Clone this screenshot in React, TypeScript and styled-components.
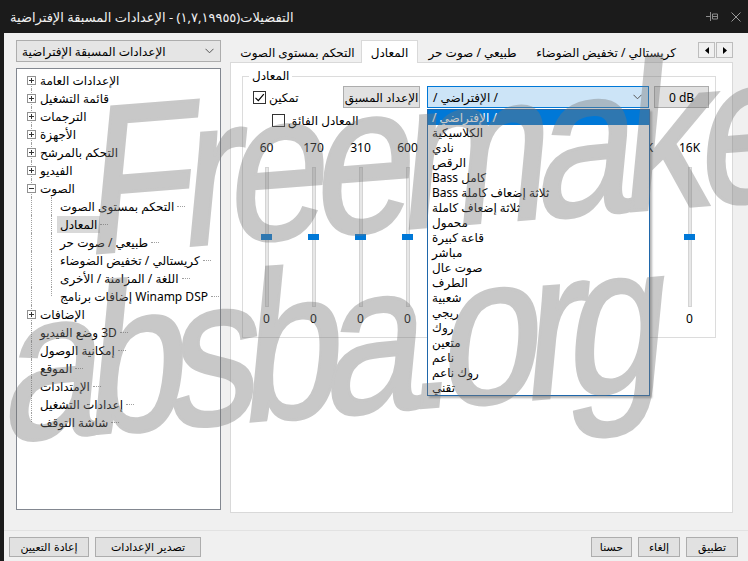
import React from 'react';
import styled, { createGlobalStyle } from 'styled-components';

const GlobalStyle = createGlobalStyle`
  * { box-sizing: border-box; }
  html, body { margin: 0; padding: 0; background: #1b1b1b; }
  body {
    font-family: "Noto Sans", "DejaVu Sans", sans-serif;
    font-size: 12px;
    color: #000;
  }
`;

const Window = styled.div`
  position: relative;
  width: 748px;
  height: 561px;
  background: #1b1b1b;
  display: flex;
  flex-direction: column;
  overflow: hidden;
`;

const TitleBar = styled.div`
  height: 33px;
  flex: none;
  display: flex;
  align-items: center;
  justify-content: space-between;
  padding: 0 7px 0 10px;
  color: #f0f0f0;
`;

const Title = styled.span`
  font-size: 13px;
  direction: rtl;
  white-space: nowrap;
`;

const TitleIcons = styled.div`
  display: flex;
  align-items: center;
  gap: 13px;
`;

const Body = styled.div`
  flex: 1;
  margin-left: 4px;
  background: #f0f0f0;
  display: flex;
  flex-direction: column;
`;

const Main = styled.div`
  display: flex;
  gap: 9px;
  padding: 7px 15px 0 12px;
`;

const Sidebar = styled.div`
  width: 205px;
  flex: none;
  display: flex;
  flex-direction: column;
  gap: 6px;
`;

const Combo = styled.div<{ $focused?: boolean; $width: number }>`
  position: relative;
  width: ${p => p.$width}px;
  height: 22px;
  flex: none;
  display: flex;
  align-items: center;
  justify-content: space-between;
  padding: 0 6px 0 5px;
  background: ${p => (p.$focused ? '#cce4f7' : '#e5e5e5')};
  border: 1px solid ${p => (p.$focused ? '#0078d7' : '#adadad')};
`;

const ComboText = styled.span`
  direction: rtl;
  white-space: nowrap;
`;

const Tree = styled.div`
  height: 442px;
  background: #fff;
  border: 1px solid #828790;
  padding: 2px 0 0 6px;
  display: flex;
  flex-direction: column;
`;

const TreeRow = styled.div`
  height: 18px;
  display: flex;
  align-items: center;
`;

const Guide = styled.span<{ $w: number; $at: number; $line: 'full' | 'top' | 'bottom' }>`
  position: relative;
  flex: none;
  width: ${p => p.$w}px;
  height: 100%;
  display: flex;
  align-items: center;

  &::before {
    content: '';
    position: absolute;
    left: ${p => p.$at}px;
    top: ${p => (p.$line === 'bottom' ? '9px' : '0')};
    bottom: ${p => (p.$line === 'top' ? '9px' : '0')};
    border-left: 1px dotted #a0a0a0;
  }
`;

const Expander = styled.svg`
  position: relative;
  z-index: 1;
  margin-left: 4px;
`;

const TreeLabel = styled.span<{ $selected?: boolean; $ltr?: boolean }>`
  padding: 1px 3px;
  line-height: 15px;
  white-space: nowrap;
  direction: ${p => (p.$ltr ? 'ltr' : 'rtl')};
  background: ${p => (p.$selected ? '#d9d9d9' : 'transparent')};
`;

const Trail = styled.span`
  width: 8px;
  height: 1px;
  border-top: 1px dotted #a0a0a0;
`;

const TabArea = styled.div`
  flex: 1;
  min-width: 0;
  display: flex;
  flex-direction: column;
`;

const TabStrip = styled.div`
  height: 22px;
  display: flex;
  align-items: flex-end;
  padding-left: 4px;
`;

const Tab = styled.div<{ $active?: boolean; $width: number }>`
  position: relative;
  z-index: 1;
  flex: none;
  width: ${p => p.$width}px;
  height: ${p => (p.$active ? 23 : 20)}px;
  margin-bottom: ${p => (p.$active ? -1 : 0)}px;
  display: flex;
  align-items: center;
  justify-content: center;
  direction: rtl;
  white-space: nowrap;
  background: ${p => (p.$active ? '#fff' : 'transparent')};
  border: 1px solid ${p => (p.$active ? '#d9d9d9' : 'transparent')};
  border-bottom: none;
`;

const ScrollArrows = styled.div`
  margin-left: auto;
  align-self: flex-start;
  margin-top: 2px;
  display: flex;
  gap: 1px;
`;

const ArrowButton = styled.div`
  width: 17px;
  height: 16px;
  display: flex;
  align-items: center;
  justify-content: center;
  background: #f0f0f0;
  border: 1px solid #bdbdbd;
`;

const Panel = styled.div`
  height: 451px;
  background: #fff;
  border: 1px solid #d9d9d9;
  padding: 6px 16px 0 11px;
`;

const GroupBox = styled.fieldset`
  margin: 0;
  padding: 0;
  height: 269px;
  border: 1px solid #dcdcdc;
  min-width: 0;
`;

const Legend = styled.legend`
  margin-left: 6px;
  padding: 0 3px;
  line-height: 14px;
  direction: rtl;
`;

const Row = styled.div<{ $indent: number; $top: number }>`
  display: flex;
  align-items: center;
  padding-left: ${p => p.$indent}px;
  margin-top: ${p => p.$top}px;
`;

const CheckItem = styled.label<{ $width?: number }>`
  display: flex;
  align-items: center;
  gap: 3px;
  height: 14px;
  width: ${p => (p.$width ? `${p.$width}px` : 'auto')};
  flex: none;
`;

const Box = styled.span`
  width: 13px;
  height: 13px;
  flex: none;
  border: 1px solid #333;
  background: #fff;
  display: flex;
  align-items: center;
  justify-content: center;
`;

const CheckText = styled.span`
  direction: rtl;
  white-space: nowrap;
`;

const Button = styled.div<{ $width: number; $gap?: number; $ltr?: boolean }>`
  width: ${p => p.$width}px;
  margin-left: ${p => p.$gap ?? 0}px;
  height: 22px;
  flex: none;
  display: flex;
  align-items: center;
  justify-content: center;
  background: #e1e1e1;
  border: 1px solid #adadad;
  direction: ${p => (p.$ltr ? 'ltr' : 'rtl')};
  white-space: nowrap;
`;

const ComboWrap = styled.div`
  position: relative;
  margin-left: 7px;
`;

const DropList = styled.div`
  position: absolute;
  z-index: 5;
  top: 23px;
  left: 0;
  width: 223px;
  background: #fff;
  border: 1px solid #1f67ab;
  box-shadow: 2px 2px 2px rgba(0, 0, 0, 0.3);
`;

const DropItem = styled.div<{ $active?: boolean }>`
  height: 15px;
  line-height: 15px;
  padding: 0 4px;
  direction: rtl;
  text-align: left;
  white-space: nowrap;
  background: ${p => (p.$active ? '#0078d7' : 'transparent')};
  color: ${p => (p.$active ? '#fff' : '#000')};
`;

const Bands = styled.div`
  display: flex;
  margin-top: 14px;
`;

const Band = styled.div`
  width: 47px;
  display: flex;
  flex-direction: column;
  align-items: center;
`;

const BandLabel = styled.span<{ $top?: number }>`
  height: 14px;
  line-height: 14px;
  margin-top: ${p => p.$top ?? 0}px;
`;

const Track = styled.div`
  margin-top: 12px;
  width: 4px;
  height: 140px;
  background: #e7e7e7;
  border: 1px solid #d4d4d4;
  display: flex;
  align-items: center;
  justify-content: center;
`;

const Thumb = styled.div`
  flex: none;
  width: 11px;
  height: 6px;
  background: #0078d7;
`;

const Separator = styled.div`
  margin-top: 17px;
  height: 1px;
  background: #e2e2e2;
`;

const Footer = styled.div`
  display: flex;
  justify-content: space-between;
  padding: 6px 10px 0 5px;
`;

const ButtonGroup = styled.div`
  display: flex;
  gap: 6px;
`;

const FooterButton = styled(Button)`
  height: 20px;
  font-family: "DejaVu Sans", sans-serif;
  font-size: 11px;
`;

const Watermark = styled.div`
  position: absolute;
  inset: 0;
  z-index: 10;
  pointer-events: none;
  overflow: hidden;
  opacity: 0.4;
`;

const WatermarkLine = styled.div<{ $x: number; $y: number; $spacing: number }>`
  position: absolute;
  left: ${p => p.$x}px;
  top: ${p => p.$y}px;
  font-family: "Liberation Sans", Arial, sans-serif;
  font-size: 210px;
  line-height: 1;
  letter-spacing: ${p => p.$spacing}px;
  white-space: nowrap;
  color: #777;
  -webkit-text-stroke: 3px #777;
  transform-origin: 0 0;
  transform: rotate(-4.5deg) skewX(-10deg) scaleX(0.85);
`;

const Chevron = () => (
  <svg width="9" height="6" viewBox="0 0 9 6">
    <path d="M0.5 0.8 L4.5 4.8 L8.5 0.8" fill="none" stroke="#555" strokeWidth="1" />
  </svg>
);

type Node = { label: string; level: 0 | 1; exp?: '+' | '-'; selected?: boolean; ltr?: boolean };

const tree: Node[] = [
  { label: 'الإعدادات العامة', level: 0, exp: '+' },
  { label: 'قائمة التشغيل', level: 0, exp: '+' },
  { label: 'الترجمات', level: 0, exp: '+' },
  { label: 'الأجهزة', level: 0, exp: '+' },
  { label: 'التحكم بالمرشح', level: 0, exp: '+' },
  { label: 'الفيديو', level: 0, exp: '+' },
  { label: 'الصوت', level: 0, exp: '-' },
  { label: 'التحكم بمستوى الصوت', level: 1 },
  { label: 'المعادل', level: 1, selected: true },
  { label: 'طبيعي / صوت حر', level: 1 },
  { label: 'كريستالي / تخفيض الضوضاء', level: 1 },
  { label: 'اللغة / المزامنة / الأخرى', level: 1 },
  { label: 'إضافات برنامج Winamp DSP', level: 1, ltr: true },
  { label: 'الإضافات', level: 0, exp: '+' },
  { label: 'وضع الفيديو \u200E3D', level: 0, ltr: true },
  { label: 'إمكانية الوصول', level: 0 },
  { label: 'الموقع', level: 0 },
  { label: 'الإمتدادات', level: 0 },
  { label: 'إعدادات التشغيل', level: 0 },
  { label: 'شاشة التوقف', level: 0 },
];

const presets = [
  '/ الإفتراضي /',
  'الكلاسيكية',
  'نادي',
  'الرقص',
  'كامل Bass',
  'ثلاثة إضعاف كاملة Bass',
  'ثلاثة إضعاف كاملة',
  'محمول',
  'قاعة كبيرة',
  'مباشر',
  'صوت عال',
  'الطرف',
  'شعبية',
  'ريجي',
  'روك',
  'متعين',
  'ناعم',
  'روك ناعم',
  'تقني',
];

const bands = ['60', '170', '310', '600', '1K', '3K', '6K', '12K', '14K', '16K'];

const ExpanderBox = ({ sign }: { sign: '+' | '-' }) => (
  <Expander width="9" height="9" viewBox="0 0 9 9">
    <rect x="0.5" y="0.5" width="8" height="8" fill="#fff" stroke="#919191" />
    <path d="M2 4.5 H7" stroke="#333" />
    {sign === '+' && <path d="M4.5 2 V7" stroke="#333" />}
  </Expander>
);

const TreeItem = ({ node, index }: { node: Node; index: number }) => {
  const lastTop = index === tree.length - 1;
  const next = tree[index + 1];
  const lastChild = node.level === 1 && (!next || next.level === 0);
  return (
    <TreeRow>
      <Guide $w={14} $at={8} $line={index === 0 ? 'bottom' : lastTop ? 'top' : 'full'}>
        {node.level === 0 && node.exp && <ExpanderBox sign={node.exp} />}
      </Guide>
      {node.level === 1 && <Guide $w={20} $at={14} $line={lastChild ? 'top' : 'full'} />}
      <TreeLabel $selected={node.selected} $ltr={node.ltr}>
        {node.label}
      </TreeLabel>
      {!node.exp && <Trail />}
    </TreeRow>
  );
};

const CheckMark = () => (
  <svg width="11" height="11" viewBox="0 0 11 11">
    <path d="M1.5 5.8 L4.3 8.6 L9.8 2.2" fill="none" stroke="#000" strokeWidth="1.2" />
  </svg>
);

export default function App() {
  return (
    <>
      <GlobalStyle />
      <Window>
        <TitleBar>
          <Title>التفضيلات(١,٧,١٩٩٥٥) - الإعدادات المسبقة الإفتراضية</Title>
          <TitleIcons>
            <svg width="12" height="11" viewBox="0 0 12 11">
              <path d="M0 5.5 H4 M4.5 1 V10 M6.5 3 H11.5 V8 H6.5 Z M6.5 5.5 H11.5" fill="none" stroke="#8c8c8c" />
            </svg>
            <svg width="10" height="10" viewBox="0 0 10 10">
              <path d="M0.5 0.5 L9.5 9.5 M9.5 0.5 L0.5 9.5" stroke="#9a9a9a" />
            </svg>
          </TitleIcons>
        </TitleBar>
        <Body>
          <Main>
            <Sidebar>
              <Combo $width={205}>
                <ComboText>الإعدادات المسبقة الإفتراضية</ComboText>
                <Chevron />
              </Combo>
              <Tree>
                {tree.map((node, i) => (
                  <TreeItem key={node.label} node={node} index={i} />
                ))}
              </Tree>
            </Sidebar>
            <TabArea>
              <TabStrip>
                <Tab $width={127}>التحكم بمستوى الصوت</Tab>
                <Tab $width={57} $active>
                  المعادل
                </Tab>
                <Tab $width={109}>طبيعي / صوت حر</Tab>
                <Tab $width={158}>كريستالي / تخفيض الضوضاء</Tab>
                <ScrollArrows>
                  <ArrowButton>
                    <svg width="4" height="7" viewBox="0 0 4 7">
                      <path d="M4 0 V7 L0 3.5 Z" fill="#000" />
                    </svg>
                  </ArrowButton>
                  <ArrowButton>
                    <svg width="4" height="7" viewBox="0 0 4 7">
                      <path d="M0 0 V7 L4 3.5 Z" fill="#000" />
                    </svg>
                  </ArrowButton>
                </ScrollArrows>
              </TabStrip>
              <Panel>
                <GroupBox>
                  <Legend>المعادل</Legend>
                  <Row $indent={10} $top={3}>
                    <CheckItem $width={90}>
                      <Box>
                        <CheckMark />
                      </Box>
                      <CheckText>تمكين</CheckText>
                    </CheckItem>
                    <Button $width={77}>الإعداد المسبق</Button>
                    <ComboWrap>
                      <Combo $focused $width={222}>
                        <ComboText>/ الإفتراضي /</ComboText>
                        <Chevron />
                      </Combo>
                      <DropList>
                        {presets.map((p, i) => (
                          <DropItem key={p} $active={i === 0}>
                            {p}
                          </DropItem>
                        ))}
                      </DropList>
                    </ComboWrap>
                    <Button $width={55} $gap={5} $ltr>
                      0 dB
                    </Button>
                  </Row>
                  <Row $indent={29} $top={5}>
                    <CheckItem>
                      <Box />
                      <CheckText>المعادل الفائق</CheckText>
                    </CheckItem>
                  </Row>
                  <Bands>
                    {bands.map(b => (
                      <Band key={b}>
                        <BandLabel>{b}</BandLabel>
                        <Track>
                          <Thumb />
                        </Track>
                        <BandLabel $top={5}>0</BandLabel>
                      </Band>
                    ))}
                  </Bands>
                </GroupBox>
              </Panel>
            </TabArea>
          </Main>
          <Separator />
          <Footer>
            <ButtonGroup>
              <FooterButton $width={80}>إعادة التعيين</FooterButton>
              <FooterButton $width={106}>تصدير الإعدادات</FooterButton>
            </ButtonGroup>
            <ButtonGroup>
              <FooterButton $width={41}>حسنا</FooterButton>
              <FooterButton $width={42}>إلغاء</FooterButton>
              <FooterButton $width={52}>تطبيق</FooterButton>
            </ButtonGroup>
          </Footer>
        </Body>
        <Watermark>
          <WatermarkLine $x={100} $y={75} $spacing={-15}>
            Freemake
          </WatermarkLine>
          <WatermarkLine $x={18} $y={262} $spacing={-19}>
            absba.org
          </WatermarkLine>
        </Watermark>
      </Window>
    </>
  );
}
